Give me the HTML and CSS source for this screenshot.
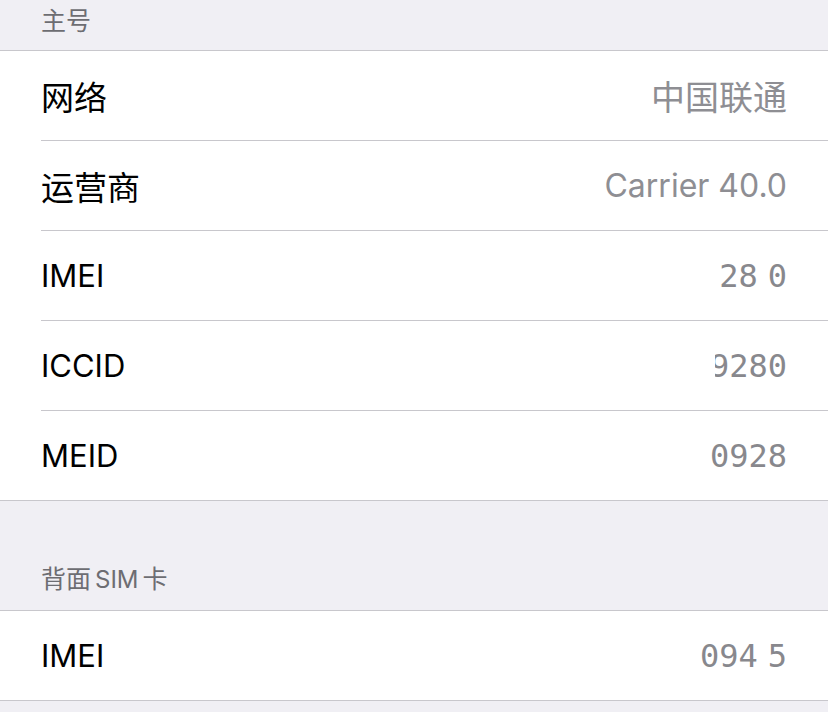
FILE: index.html
```html
<!DOCTYPE html>
<html>
  <head>
    <meta charset="UTF-8" />
    <title>SIM 卡信息</title>
    <link rel="stylesheet" href="styles.css">
  </head>
  <body>
    <div class="section-head top">主号</div>
    <ul class="group">
      <li class="row">
        <span class="label zh">网络</span>
        <span class="value zh wide">中国联通</span>
      </li>
      <li class="row">
        <span class="label zh">运营商</span>
        <span class="value">Carrier 40.0</span>
      </li>
      <li class="row">
        <span class="label">IMEI</span>
        <span class="value mono">28<span class="gap"></span>0</span>
      </li>
      <li class="row">
        <span class="label">ICCID</span>
        <span class="value mono"><span class="clip">9280</span></span>
      </li>
      <li class="row">
        <span class="label">MEID</span>
        <span class="value mono">0928</span>
      </li>
    </ul>

    <div class="section-head">背面<span class="latin">SIM</span>卡</div>
    <ul class="group">
      <li class="row">
        <span class="label">IMEI</span>
        <span class="value mono">094<span class="gap"></span>5</span>
      </li>
    </ul>
  </body>
</html>
```

FILE: styles.css
```css
:root {
  --canvas: #f0eff4;
  --separator: #c8c7cc;
  --muted: #8e8e93;
  --head: #6d6d72;
}

body {
  font-family: Inter, "Noto Sans", "Noto Sans CJK SC", sans-serif;
  background: var(--canvas);
  margin: 0;
  color: #000;
}

.section-head {
  height: 110px;
  box-sizing: border-box;
  padding: 0 41px 15px;
  display: flex;
  align-items: flex-end;
  font-size: 25px;
  color: var(--head);
  border-bottom: 1px solid var(--separator);
}

.section-head.top {
  height: 51px;
  padding-bottom: 13px;
}

.section-head .latin {
  font-size: 24px;
  margin: 0 4px 1px;
}

.group {
  list-style: none;
  margin: 0;
  padding: 0 0 0 41px;
  background: #fff;
  border-bottom: 1px solid var(--separator);
}

.row {
  height: 89px;
  padding-right: 41px;
  display: flex;
  align-items: center;
  justify-content: space-between;
  border-bottom: 1px solid var(--separator);
}

.row:last-child {
  border-bottom: none;
}

.label {
  font-size: 31px;
}

.value {
  font-size: 32px;
  color: var(--muted);
}

.zh {
  font-size: 33px;
}

.zh.wide {
  font-size: 34px;
}

.mono {
  font-family: "DejaVu Sans Mono", monospace;
  font-size: 32px;
  color: #88888d;
}

.gap {
  display: inline-block;
  width: 10px;
}

/* keep only the tail of a long number */
.clip {
  display: inline-block;
  width: 72px;
  overflow: hidden;
  direction: rtl;
  white-space: nowrap;
  vertical-align: bottom;
}
```
